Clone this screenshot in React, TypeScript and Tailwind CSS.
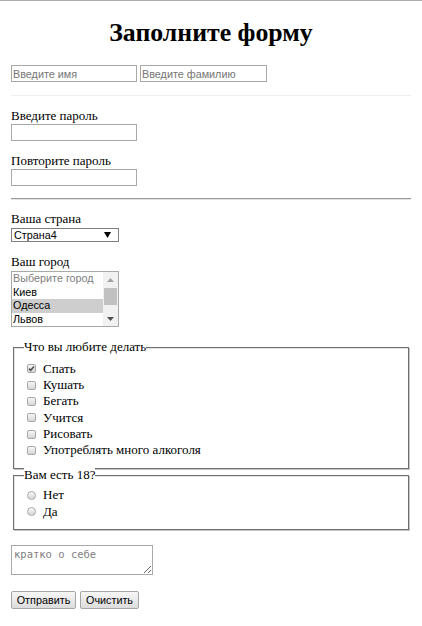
import React from "react";

const sans = "font-['Liberation_Sans',Arial,sans-serif]";

function TextInput({ placeholder, className }: { placeholder?: string; className: string }) {
  return (
    <input
      type="text"
      placeholder={placeholder}
      className={`h-[17px] border border-[#a9a9a9] px-[1px] text-[10.8px] leading-[15px] text-black outline-none placeholder:text-[#757575] ${sans} ${className}`}
    />
  );
}

function Checkbox({ checked }: { checked?: boolean }) {
  return (
    <span className="relative w-[9px] h-[9px] rounded-[2px] border border-[#a8a8a8] bg-linear-to-b from-[#f7f7f7] to-[#d6d6d6] shrink-0">
      {checked && (
        <svg viewBox="0 0 9 9" className="absolute left-[-1px] top-[-1px] w-[9px] h-[9px]">
          <path d="M2 4.6 L3.7 6.3 L7 2.4" fill="none" stroke="#4d4d4d" strokeWidth="1.5" />
        </svg>
      )}
    </span>
  );
}

function Radio() {
  return (
    <span className="w-[9px] h-[9px] rounded-full border border-[#a8a8a8] bg-linear-to-b from-[#f7f7f7] to-[#d6d6d6] shrink-0" />
  );
}

function Row({ children, control }: { children: React.ReactNode; control: React.ReactNode }) {
  return (
    <div className="flex items-center h-[16.4px] ml-[3px]">
      {control}
      <span className="ml-[7px] leading-[16.4px]">{children}</span>
    </div>
  );
}

export default function App() {
  const hobbies = ["Кушать", "Бегать", "Учится", "Рисовать", "Употреблять много алкоголя"];
  return (
    <div className="w-[422px] h-[626px] bg-white border-t border-[#acacac] font-['Liberation_Serif','Times_New_Roman',serif] text-[13px] text-black overflow-hidden">
      <div className="px-[11px] flex flex-col items-start">
        <h1 className="self-stretch mt-[15px] text-center text-[25.8px] leading-[33px] font-bold">Заполните форму</h1>

        <div className="mt-[16px] flex gap-[3px]">
          <TextInput placeholder="Введите имя" className="w-[126px]" />
          <TextInput placeholder="Введите фамилию" className="w-[127px]" />
        </div>

        <div className="self-stretch mt-[13px] h-px bg-[#eeeeee]" />

        <div className="mt-[12px] leading-[16px]">Введите пароль</div>
        <TextInput className="w-[126px]" />

        <div className="mt-[12px] leading-[16px]">Повторите пароль</div>
        <TextInput className="w-[126px]" />

        <div className="self-stretch mt-[12px] h-[2px] border-t border-[#9d9d9d] bg-[#e2e2e2]" />

        <div className="mt-[11px] leading-[16px]">Ваша страна</div>
        <div className={`mt-[1px] w-[108px] h-[14px] border border-[#7f7f7f] flex items-center justify-between pl-[2px] pr-[7px] text-[10.8px] leading-[12px] ${sans}`}>
          <span>Страна4</span>
          <svg viewBox="0 0 7 6" className="w-[7px] h-[6px]">
            <path d="M0 0 H7 L3.5 6 Z" fill="#000" />
          </svg>
        </div>

        <div className="mt-[12px] leading-[16px]">Ваш город</div>
        <div className={`mt-[1px] w-[108px] h-[56px] border border-[#a9a9a9] flex text-[10.8px] ${sans}`}>
          <div className="flex-1 flex flex-col">
            <div className="h-[13.5px] leading-[13.5px] pl-[1px] text-[#808080]">Выберите город</div>
            <div className="h-[13.5px] leading-[13.5px] pl-[1px]">Киев</div>
            <div className="h-[13.5px] leading-[13.5px] pl-[1px] bg-[#cecece]">Одесса</div>
            <div className="h-[13.5px] leading-[13.5px] pl-[1px]">Львов</div>
          </div>
          <div className="w-[15px] bg-[#f1f1f1] flex flex-col items-center">
            <div className="h-[16px] flex items-center justify-center">
              <svg viewBox="0 0 7 4" className="w-[7px] h-[4px]">
                <path d="M0 4 L3.5 0 L7 4 Z" fill="#a3a3a3" />
              </svg>
            </div>
            <div className="w-[13px] h-[17px] bg-[#c1c1c1]" />
            <div className="flex-1" />
            <div className="h-[15px] flex items-center justify-center">
              <svg viewBox="0 0 7 4" className="w-[7px] h-[4px]">
                <path d="M0 0 L7 0 L3.5 4 Z" fill="#505050" />
              </svg>
            </div>
          </div>
        </div>

        <fieldset className="self-stretch mt-[12px] mx-[2px] border border-[#6f6f6f] shadow-[1px_1px_0_#c4c4c4,inset_1px_1px_0_#e4e4e4] pl-[10px] pt-[5px] pb-[9px]">
          <legend className="p-0 leading-[16.5px] bg-white">Что вы любите делать</legend>
          <Row control={<Checkbox checked />}>Спать</Row>
          {hobbies.map((h) => (
            <Row key={h} control={<Checkbox />}>
              {h}
            </Row>
          ))}
        </fieldset>

        <fieldset className="self-stretch mt-[-2px] mx-[2px] border border-[#6f6f6f] shadow-[1px_1px_0_#c4c4c4,inset_1px_1px_0_#e4e4e4] pl-[10px] pt-[4px] pb-[9px]">
          <legend className="p-0 leading-[16.5px] bg-white">Вам есть 18?</legend>
          <Row control={<Radio />}>Нет</Row>
          <Row control={<Radio />}>Да</Row>
        </fieldset>

        <textarea
          placeholder="кратко о себе"
          className="mt-[15px] w-[142px] h-[30px] border border-[#a9a9a9] resize px-[2px] py-[2px] text-[10.5px] leading-[12px] font-['DejaVu_Sans_Mono',monospace] outline-none placeholder:text-[#808080]"
        />

        <div className={`mt-[16px] flex gap-[4px] text-[10.8px] ${sans}`}>
          <button className="h-[18px] w-[65px] border border-[#a6a6a6] rounded-[2px] bg-linear-to-b from-[#f7f7f7] to-[#dcdcdc] leading-[16px]">Отправить</button>
          <button className="h-[18px] w-[59px] border border-[#a6a6a6] rounded-[2px] bg-linear-to-b from-[#f7f7f7] to-[#dcdcdc] leading-[16px]">Очистить</button>
        </div>
      </div>
    </div>
  );
}
